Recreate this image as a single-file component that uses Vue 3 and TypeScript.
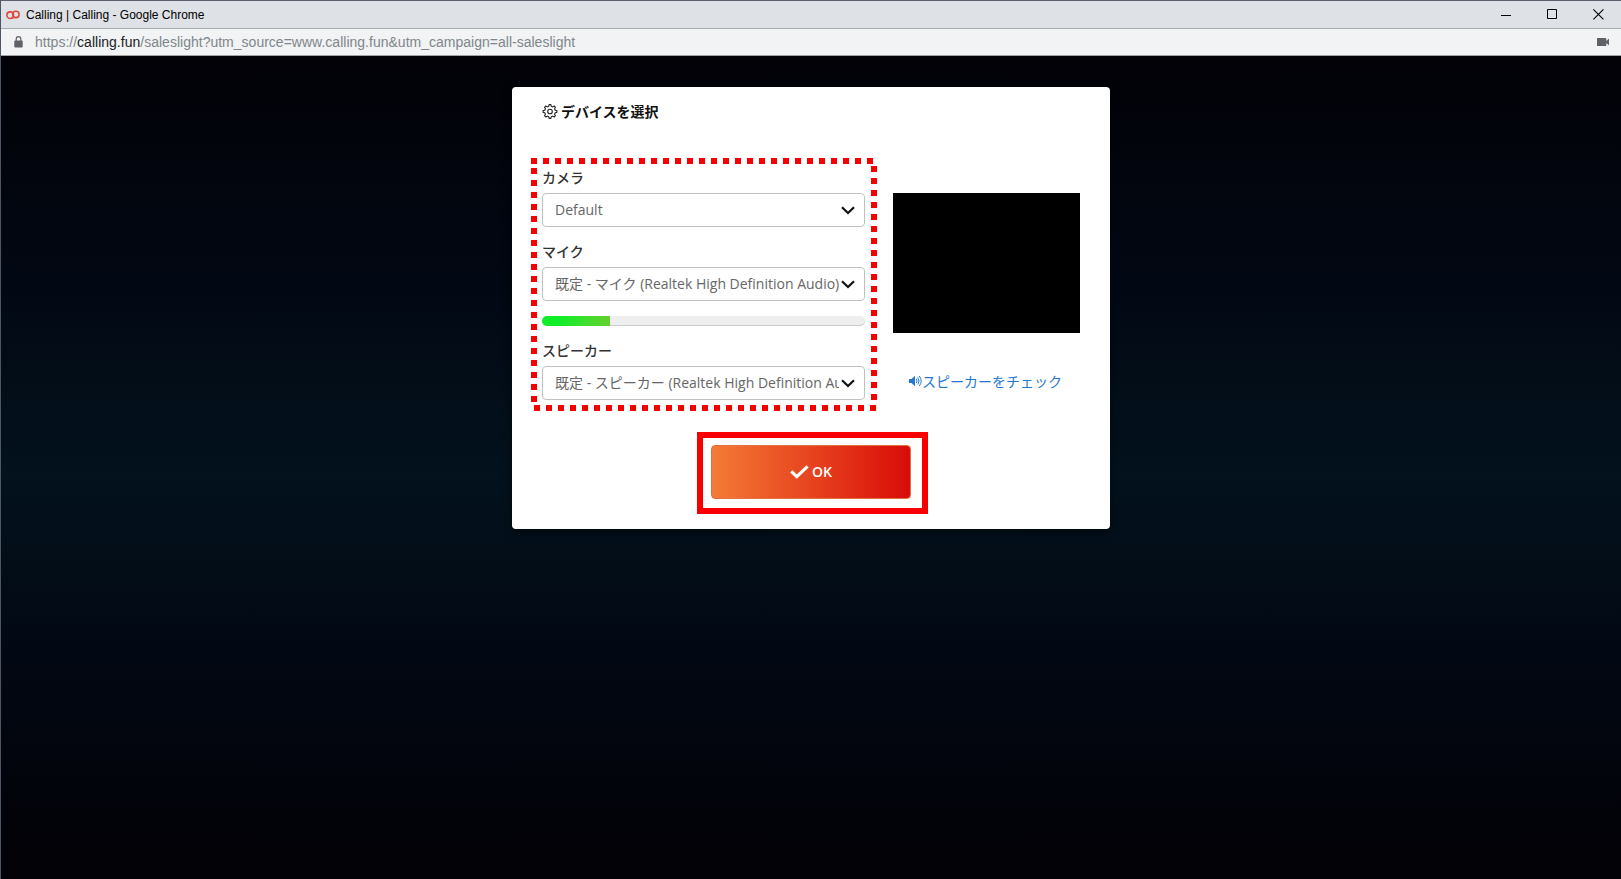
<script setup lang="ts">
interface DeviceField {
  id: string
  label: string
  value: string
  level?: number
}

const fields: DeviceField[] = [
  { id: 'camera', label: 'カメラ', value: 'Default' },
  { id: 'mic', label: 'マイク', value: '既定 - マイク (Realtek High Definition Audio)', level: 21 },
  { id: 'speaker', label: 'スピーカー', value: '既定 - スピーカー (Realtek High Definition Audio)' },
]
</script>

<template>
  <div class="window">
    <header class="titlebar">
      <svg class="favicon" width="14" height="10" viewBox="0 0 14 10" fill="none" stroke="#e0483e" stroke-width="1.6">
        <circle cx="4.2" cy="5.2" r="3.3" />
        <circle cx="9.9" cy="4.4" r="3.2" />
        <path d="M5.5 8 8.600 7.200" />
      </svg>
      <span class="title">Calling | Calling - Google Chrome</span>
      <div class="controls">
        <svg width="11" height="11" viewBox="0 0 11 11" stroke="#000"><path d="M0 6.5h10" /></svg>
        <svg width="11" height="11" viewBox="0 0 11 11" stroke="#000" fill="none"><path d="M.5.5h9v9h-9z" /></svg>
        <svg width="11" height="11" viewBox="0 0 11 11" stroke="#000" stroke-width="1.1"><path d="M.4.4 10.4 10.4M10.4.4.4 10.4" /></svg>
      </div>
    </header>

    <div class="urlbar">
      <svg class="lock" width="9" height="12" viewBox="0 0 9 12">
        <path d="M2.2 5V3a2.3 2.3 0 0 1 4.6 0v2" fill="none" stroke="#5f6368" stroke-width="1.2" />
        <rect x="0.300" y="4.4" width="8.400" height="7" rx="1" fill="#5f6368" />
      </svg>
      <span class="url">https://<b>calling.fun</b>/saleslight?utm_source=www.calling.fun&amp;utm_campaign=all-saleslight</span>
      <svg class="cam" width="12" height="8" viewBox="0 0 12 8" fill="#5f6368">
        <path d="M.6 0h8q.7 0 .7.700V3L12 .6v6.8L9.300 5v2.300q0 .7-.7.7h-8Q0 8 0 7.400V.6Q0 0 .6 0z" />
      </svg>
    </div>

    <main class="stage">
      <section class="dialog">
        <h1 class="heading">
          <svg width="16" height="16" viewBox="0 0 16 16" fill="none" stroke="#222" stroke-width="1.1" stroke-linejoin="round">
            <path d="M6.700 2.300 7.100.6h1.800l.4 1.700 1.400.6 1.500-.9 1.300 1.300-.9 1.500.6 1.400 1.700.4v1.800l-1.700.4-.6 1.400.9 1.500-1.300 1.300-1.500-.9-1.400.6-.4 1.700H7.100l-.4-1.700-1.400-.6-1.500.9-1.300-1.300.9-1.500-.6-1.400-1.700-.4V6.600l1.700-.4.6-1.400-.9-1.500L3.800 2l1.500.9z" />
            <circle cx="8" cy="7.500" r="2.300" />
          </svg>
          <span>デバイスを選択</span>
        </h1>

        <div class="columns">
          <div class="fields">
            <div v-for="field in fields" :key="field.id" class="field">
              <div class="label">{{ field.label }}</div>
              <div class="select">
                <span class="value">{{ field.value }}</span>
                <svg width="14" height="9" viewBox="0 0 14 9" fill="none" stroke="#111" stroke-width="2.200">
                  <path d="M1 1.200 7 7l6-5.800" />
                </svg>
              </div>
              <div v-if="field.level !== undefined" class="meter">
                <div class="level" :style="{ width: field.level + '%' }"></div>
              </div>
            </div>
            <svg class="dots" width="346" height="253" viewBox="0 0 346 253" stroke="#f80000" stroke-width="6" stroke-dasharray="6 6">
              <path d="M0 3H342" />
              <path d="M343 8V242" />
              <path d="M3 10V244" />
              <path d="M3 250H345" />
            </svg>
          </div>

          <aside class="side">
            <div class="preview"></div>
            <div class="check-speaker">
              <svg width="13" height="12" viewBox="0 0 13 12" fill="none" stroke="#2478d0" stroke-width="1">
                <path d="M0 4h2.500L6 .8v10.400L2.500 8H0z" fill="#2478d0" stroke="none" />
                <path d="M7.300 4q1.500 2 0 4M8.800 2.500q2.500 3.500 0 7M10.300 1q3.800 5 0 10" />
              </svg>
              <span>スピーカーをチェック</span>
            </div>
          </aside>
        </div>

        <div class="highlight">
          <button class="ok" type="button">
            <svg width="19" height="14" viewBox="0 0 19 14" fill="none" stroke="#fff" stroke-width="3.200">
              <path d="M1.300 6.300 6.800 11.600 17.600 1.300" />
            </svg>
            <span>OK</span>
          </button>
        </div>
      </section>
    </main>
  </div>
</template>

<style>
html,
body {
  margin: 0;
  overflow: hidden;
}
</style>

<style scoped>
* {
  box-sizing: border-box;
}
svg {
  display: block;
  flex: none;
}
.window {
  width: 1621px;
  height: 879px;
  display: flex;
  flex-direction: column;
  border-top: 1px solid #5c5f6b;
  border-left: 1px solid #4c5666;
  font-family: "Open Sans", "Noto Sans CJK JP", sans-serif;
  font-size: 14px;
}
.titlebar {
  height: 28px;
  flex: none;
  display: flex;
  align-items: center;
  padding: 0 17px 0 5px;
  background: #dee1e6;
  border-bottom: 1px solid #a9abb0;
  font: 12px "Liberation Sans", Arial, sans-serif;
  color: #000;
}
.title {
  margin-left: 6px;
  white-space: nowrap;
}
.controls {
  margin-left: auto;
  display: flex;
  gap: 35px;
}
.urlbar {
  height: 27px;
  flex: none;
  display: flex;
  align-items: center;
  padding: 0 12px 0 13px;
  background: #f1f3f4;
  border-bottom: 1px solid #a2a2a4;
  font: 14px "Liberation Sans", Arial, sans-serif;
  color: #80868b;
}
.lock {
  margin-top: -1px;
}
.url {
  margin-left: 12px;
  white-space: nowrap;
  letter-spacing: 0.01px;
}
.url b {
  font-weight: 400;
  color: #202124;
}
.cam {
  margin-left: auto;
}
.stage {
  flex: 1;
  padding: 31px 0 0 511px;
  background: linear-gradient(#020207 0%, #020712 25%, #03121d 51%, #020712 75%, #020207 97%);
}
.dialog {
  width: 598px;
  height: 442px;
  padding: 16px 30px 0;
  background: #fff;
  border-radius: 4px;
  box-shadow: 0 2px 8px rgba(0, 0, 0, 0.6);
}
.heading {
  display: flex;
  align-items: center;
  gap: 3px;
  height: 17px;
  margin: 0;
  font-size: 14px;
  font-weight: 600;
  line-height: 17px;
  color: #111;
}
.columns {
  display: flex;
  justify-content: space-between;
  height: 312px;
  padding-top: 46px;
}
.fields {
  position: relative;
  width: 323px;
  padding-top: 1px;
}
.field {
  margin-bottom: 14px;
}
.label {
  height: 20px;
  margin-bottom: 6px;
  padding-top: 1px;
  line-height: 20px;
  font-weight: 500;
  color: #333;
}
.select {
  display: flex;
  align-items: center;
  height: 34px;
  padding: 0 10px 0 12px;
  border: 1px solid #bfc2c5;
  border-radius: 4px;
  color: #666;
}
.value {
  flex: none;
  width: 284px;
  margin-right: 2px;
  overflow: hidden;
  white-space: nowrap;
  line-height: 24px;
}
.meter {
  height: 10px;
  margin-top: 15px;
  overflow: hidden;
  border-radius: 5px;
  background: #eee;
  box-shadow: inset 0 -1px 0 #ccc;
}
.level {
  height: 100%;
  background: linear-gradient(90deg, #10ee28 25%, #66d030);
}
.dots {
  position: absolute;
  left: -11px;
  top: -8px;
}
.side {
  width: 187px;
  padding-top: 27px;
}
.preview {
  height: 140px;
  background: #000;
}
.check-speaker {
  display: flex;
  align-items: center;
  height: 24px;
  margin: 36px 0 0 16px;
  white-space: nowrap;
  color: #2478d0;
}
.highlight {
  display: flex;
  width: 231px;
  height: 82px;
  margin-left: 155px;
  padding: 7px 8px;
  border: 6px solid #f80000;
}
.ok {
  display: flex;
  align-items: center;
  justify-content: center;
  gap: 3px;
  width: 200px;
  height: 54px;
  padding: 0 0 1px;
  border: 1px solid #e07040;
  border-radius: 4px;
  background: linear-gradient(90deg, #f47b35, #d90c08);
  font: 600 14px "Open Sans", sans-serif;
  color: #fff;
}
</style>
